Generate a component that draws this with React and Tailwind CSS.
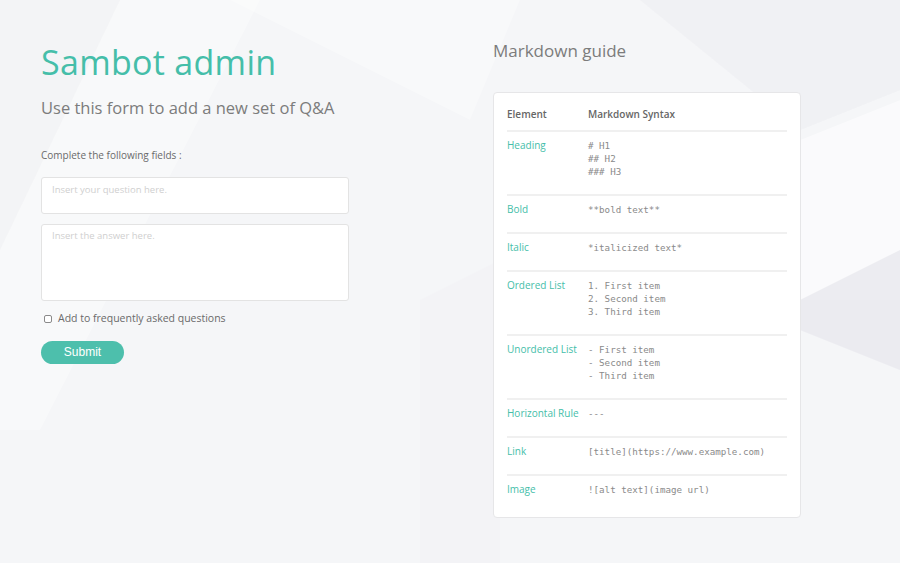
import React from "react"

const rows = [
  { name: "Heading", syntax: ["# H1", "## H2", "### H3"] },
  { name: "Bold", syntax: ["**bold text**"] },
  { name: "Italic", syntax: ["*italicized text*"] },
  { name: "Ordered List", syntax: ["1. First item", "2. Second item", "3. Third item"] },
  { name: "Unordered List", syntax: ["- First item", "- Second item", "- Third item"] },
  { name: "Horizontal Rule", syntax: ["---"] },
  { name: "Link", syntax: ["[title](https://www.example.com)"] },
  { name: "Image", syntax: ["![alt text](image url)"] },
]

const Backdrop = () => (
  <svg className="absolute inset-0 w-full h-full pointer-events-none" viewBox="0 0 900 563" preserveAspectRatio="none">
    <polygon points="0,0 260,0 40,430 0,430" fill="#ffffff" opacity="0.35" />
    <polygon points="0,250 120,0 0,0" fill="#ececef" opacity="0.35" />
    <polygon points="230,0 520,0 470,120" fill="#ffffff" opacity="0.3" />
    <polygon points="800,140 900,100 900,300 800,300" fill="#fbfbfc" opacity="0.9" />
    <polygon points="800,300 900,250 900,370 800,330" fill="#e9e9ed" opacity="0.8" />
    <polygon points="640,0 900,0 900,90 800,130" fill="#ececf0" opacity="0.45" />
    <polygon points="420,300 500,260 500,563 420,563" fill="#f1f1f3" opacity="0.4" />
  </svg>
)

export default function App() {
  return (
    <div className="relative w-[900px] h-[563px] overflow-hidden bg-[#f5f6f8]" style={{ fontFamily: "'Open Sans', 'Noto Sans', sans-serif" }}>
      <Backdrop />
      <div className="relative flex gap-[144px] pl-[41px] pt-[40px]">
        {/* Form column */}
        <div className="w-[308px]">
          <h1 className="text-[34px] leading-[44px] text-[#45bea9] tracking-[0.3px]">Sambot admin</h1>
          <p className="mt-[13px] text-[16.5px] leading-[22px] text-[#7c7c7c]">Use this form to add a new set of Q&amp;A</p>
          <p className="mt-[29px] text-[10px] leading-[14px] text-[#6a6a6a]">Complete the following fields :</p>
          <input
            className="mt-[15px] block w-full h-[37px] bg-white border border-[#e3e3e3] rounded-[3px] px-[10px] pt-[2px] pb-[14px] text-[9.5px] placeholder:text-[#cfcfcf] outline-none"
            placeholder="Insert your question here."
          />
          <textarea
            className="mt-[10px] block w-full h-[77px] bg-white border border-[#e3e3e3] rounded-[3px] px-[10px] pt-[4px] text-[9.5px] leading-[14px] placeholder:text-[#cfcfcf] outline-none resize-none"
            placeholder="Insert the answer here."
          />
          <label className="mt-[10px] flex items-center gap-[6px] pl-[3px] text-[10.5px] text-[#6a6a6a]">
            <span className="w-[8px] h-[8px] border border-[#8a8a8a] rounded-[2px] bg-white" />
            Add to frequently asked questions
          </label>
          <button className="mt-[14px] w-[83px] h-[23px] rounded-full bg-[#4dbfac] text-white text-[12px] leading-[23px]" style={{ fontFamily: "'Liberation Sans', Arial, sans-serif" }}>
            Submit
          </button>
        </div>

        {/* Markdown guide */}
        <div className="w-[308px]">
          <h2 className="text-[17px] leading-[22px] text-[#7c7c7c]">Markdown guide</h2>
          <div className="mt-[30px] bg-white border border-[#e6e6e8] rounded-[4px] px-[13px] pt-[7px] pb-[5px]">
            <div className="flex text-[10px] leading-[13px] font-semibold text-[#666] pt-[8px] pb-[9px]">
              <div className="w-[81px]">Element</div>
              <div>Markdown Syntax</div>
            </div>
            {rows.map((r) => (
              <div key={r.name} className="flex border-t-2 border-[#f0f0f0] pt-[7px] pb-[16px] text-[10px] leading-[13px]">
                <div className="w-[81px] text-[#45bea9]">{r.name}</div>
                <div className="text-[9.2px] text-[#8a8a8a]" style={{ fontFamily: "'DejaVu Sans Mono', 'Liberation Mono', monospace" }}>
                  {r.syntax.map((s) => (
                    <div key={s} className="whitespace-pre">{s}</div>
                  ))}
                </div>
              </div>
            ))}
          </div>
        </div>
      </div>
    </div>
  )
}
